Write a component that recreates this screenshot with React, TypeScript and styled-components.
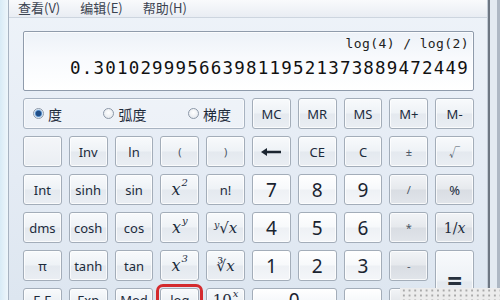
import React from 'react';
import styled, { createGlobalStyle, css } from 'styled-components';

const Global = createGlobalStyle`
  html, body { margin: 0; padding: 0; }
  body {
    width: 500px; height: 300px; overflow: hidden; background: #ffffff;
    font-family: "Noto Sans", "Noto Sans CJK SC", sans-serif;
  }
`;

const Window = styled.div`
  position: relative;
  width: 500px;
  height: 300px;
  display: flex;
  overflow: hidden;
`;

const LeftFrame = styled.div`
  flex: none;
  width: 8px;
  background: linear-gradient(to right, #d8ebf6, #eef6fb);
  border-right: 1px solid #a7b3c1;
`;

const RightFrame = styled.div`
  flex: none;
  width: 13px;
  display: flex;
`;

const FrameLine = styled.div<{ $w: number; $c: string }>`
  flex: none;
  width: ${p => p.$w}px;
  background: ${p => p.$c};
`;

const Body = styled.div`
  flex: 1;
  display: flex;
  flex-direction: column;
  background: linear-gradient(to bottom, #eef3f9 0%, #e4ebf4 60%, #dde6f0 100%);
`;

const MenuBar = styled.div`
  flex: none;
  height: 17px;
  display: flex;
  align-items: flex-start;
  gap: 20px;
  padding-left: 9px;
  background: linear-gradient(to bottom, #f9fafc, #e9edf3);
  border-bottom: 1px solid #cdd5df;
`;

const MenuItem = styled.span`
  font-family: "Noto Sans CJK SC", "Noto Sans", sans-serif;
  font-size: 13px;
  line-height: 15px;
  color: #3b4350;
`;

const Content = styled.div`
  flex: 1;
  display: flex;
  flex-direction: column;
  padding: 13px 13px 0 14px;
`;

const Display = styled.div`
  flex: none;
  height: 55px;
  border: 1px solid #8f9bab;
  border-radius: 2px;
  background: linear-gradient(to bottom, #edf2f8 0%, #f8fafd 45%, #ffffff 100%);
  box-shadow: inset 0 0 0 1px rgba(255,255,255,0.7);
  display: flex;
  flex-direction: column;
  align-items: flex-end;
  padding: 3px 4px 0 0;
`;

const Expr = styled.div`
  font-family: "DejaVu Sans Mono", "Liberation Mono", monospace;
  font-size: 13px;
  letter-spacing: 0.4px;
  line-height: 16px;
  color: #222;
  margin-top: 1px;
`;

const Result = styled.div`
  font-family: "DejaVu Sans Mono", "Liberation Mono", monospace;
  font-size: 17.5px;
  letter-spacing: 1.2px;
  line-height: 22px;
  color: #111;
  margin-top: 5px;
`;

const Grid = styled.div`
  margin-top: 7px;
  display: grid;
  grid-template-columns: repeat(10, 1fr);
  grid-template-rows: repeat(5, 31px) 24px;
  gap: 7px;
`;

const RadioGroup = styled.div`
  grid-column: span 5;
  display: flex;
  align-items: center;
  justify-content: space-between;
  padding: 0 13px 0 9px;
  border: 1px solid #a8b3c1;
  border-radius: 3px;
  background: rgba(255,255,255,0.25);
  box-shadow: inset 0 0 0 1px rgba(255,255,255,0.6);
`;

const RadioItem = styled.label`
  display: flex;
  align-items: center;
  gap: 4px;
  font-family: "Noto Sans CJK SC", "Noto Sans", sans-serif;
  font-size: 14px;
  color: #1d2a3a;
`;

const RadioDot = styled.span<{ $on?: boolean }>`
  width: 11px;
  height: 11px;
  box-sizing: border-box;
  border-radius: 50%;
  border: 1px solid #8c98a8;
  background: radial-gradient(circle at 50% 40%, #ffffff, #dfe4ea);
  ${p => p.$on && css`
    background: radial-gradient(circle, #1f4d86 0 2.5px, #4f88c6 3px, #cfe2f4 4px, #ffffff 5px);
  `}
`;

type Variant = 'fn' | 'digit' | 'op' | 'blank';

const Key = styled.div<{ $v?: Variant; $cols?: number; $rows?: number; $hl?: boolean }>`
  ${p => p.$cols && css`grid-column: span ${p.$cols};`}
  ${p => p.$rows && css`grid-row: span ${p.$rows};`}
  display: flex;
  align-items: center;
  justify-content: center;
  box-sizing: border-box;
  border: 1px solid #a3adb9;
  border-radius: 3px;
  box-shadow: inset 0 0 0 1px rgba(255,255,255,0.75);
  font-size: 13px;
  color: #1c2b3c;
  white-space: nowrap;
  background: linear-gradient(to bottom, #f8fafc 0%, #eef2f6 48%, #e4e9ef 52%, #eaeef3 100%);
  ${p => p.$v === 'digit' && css`
    background: linear-gradient(to bottom, #ffffff 0%, #f7f9fb 48%, #eef1f5 52%, #f4f6f9 100%);
    font-size: 19px;
    color: #1a2430;
  `}
  ${p => p.$v === 'op' && css`
    background: linear-gradient(to bottom, #f2f4f7 0%, #e6e9ed 48%, #d9dde3 52%, #e1e5ea 100%);
  `}
  ${p => p.$v === 'blank' && css`
    background: linear-gradient(to bottom, #f4f6f9, #eaeef3);
  `}
  ${p => p.$hl && css`
    outline: 3px solid #d42a2e;
    outline-offset: 1px;
  `}
`;

const Small = styled.span`
  font-size: 11px;
  color: #4a5666;
`;

const Big = styled.span`
  font-size: 26px;
  font-weight: 700;
  color: #26303c;
  line-height: 1;
`;

const MathText = styled.span<{ $size?: number }>`
  font-family: "DejaVu Serif", "Liberation Serif", serif;
  font-style: italic;
  font-size: ${p => p.$size ?? 16}px;
  color: #1c2b3c;
  display: inline-flex;
  align-items: flex-start;
`;

const Up = styled.span`
  font-size: 10px;
  margin-left: 1px;
  margin-top: -3px;
`;

const Plain = styled.span`
  font-style: normal;
`;

const Dots = styled.div`
  position: absolute;
  left: 400px;
  top: 288px;
  width: 100px;
  height: 12px;
  background-color: #ececec;
  background-image: radial-gradient(circle, #a9a9a9 0 0.9px, transparent 1.3px);
  background-size: 5.7px 5px;
  background-position: 1px 0;
`;

const Arrow = () => (
  <svg width="22" height="10" viewBox="0 0 22 10">
    <path d="M1 5 L7 1 L7 3.8 L21 3.8 L21 6.2 L7 6.2 L7 9 Z" fill="#1b2530" />
  </svg>
);

export default function App() {
  return (
    <Window>
      <Global />
      <LeftFrame />
      <Body>
        <MenuBar>
          <MenuItem>查看(V)</MenuItem>
          <MenuItem>编辑(E)</MenuItem>
          <MenuItem>帮助(H)</MenuItem>
        </MenuBar>
        <Content>
          <Display>
            <Expr>log(4) / log(2)</Expr>
            <Result>0.30102999566398119521373889472449</Result>
          </Display>
          <Grid>
            <RadioGroup>
              <RadioItem><RadioDot $on />度</RadioItem>
              <RadioItem><RadioDot />弧度</RadioItem>
              <RadioItem><RadioDot />梯度</RadioItem>
            </RadioGroup>
            <Key>MC</Key>
            <Key>MR</Key>
            <Key>MS</Key>
            <Key>M+</Key>
            <Key>M-</Key>

            <Key $v="blank" />
            <Key>Inv</Key>
            <Key>ln</Key>
            <Key><Small>(</Small></Key>
            <Key><Small>)</Small></Key>
            <Key><Arrow /></Key>
            <Key>CE</Key>
            <Key>C</Key>
            <Key><Small>±</Small></Key>
            <Key><Small>√</Small></Key>

            <Key>Int</Key>
            <Key>sinh</Key>
            <Key>sin</Key>
            <Key><MathText>x<Up>2</Up></MathText></Key>
            <Key>n!</Key>
            <Key $v="digit">7</Key>
            <Key $v="digit">8</Key>
            <Key $v="digit">9</Key>
            <Key $v="op"><Small>/</Small></Key>
            <Key $v="op">%</Key>

            <Key>dms</Key>
            <Key>cosh</Key>
            <Key>cos</Key>
            <Key><MathText>x<Up>y</Up></MathText></Key>
            <Key><MathText $size={15}>ʸ√x</MathText></Key>
            <Key $v="digit">4</Key>
            <Key $v="digit">5</Key>
            <Key $v="digit">6</Key>
            <Key $v="op"><Small>*</Small></Key>
            <Key $v="op"><MathText $size={14}><Plain>1/</Plain>x</MathText></Key>

            <Key>π</Key>
            <Key>tanh</Key>
            <Key>tan</Key>
            <Key><MathText>x<Up>3</Up></MathText></Key>
            <Key><MathText $size={15}><Plain>∛</Plain>x</MathText></Key>
            <Key $v="digit">1</Key>
            <Key $v="digit">2</Key>
            <Key $v="digit">3</Key>
            <Key $v="op"><Small>-</Small></Key>
            <Key $rows={2}><Big>=</Big></Key>

            <Key>F-E</Key>
            <Key>Exp</Key>
            <Key>Mod</Key>
            <Key $hl>log</Key>
            <Key><MathText $size={15}><Plain>10</Plain><Up>x</Up></MathText></Key>
            <Key $v="digit" $cols={2}>0</Key>
            <Key $v="digit">.</Key>
            <Key $v="op">+</Key>
          </Grid>
        </Content>
      </Body>
      <RightFrame>
        <FrameLine $w={1} $c="#c3ccd6" />
        <FrameLine $w={2} $c="#6e7783" />
        <FrameLine $w={7} $c="#e3eaf1" />
        <FrameLine $w={3} $c="#aeb8c4" />
      </RightFrame>
      <Dots />
    </Window>
  );
}
